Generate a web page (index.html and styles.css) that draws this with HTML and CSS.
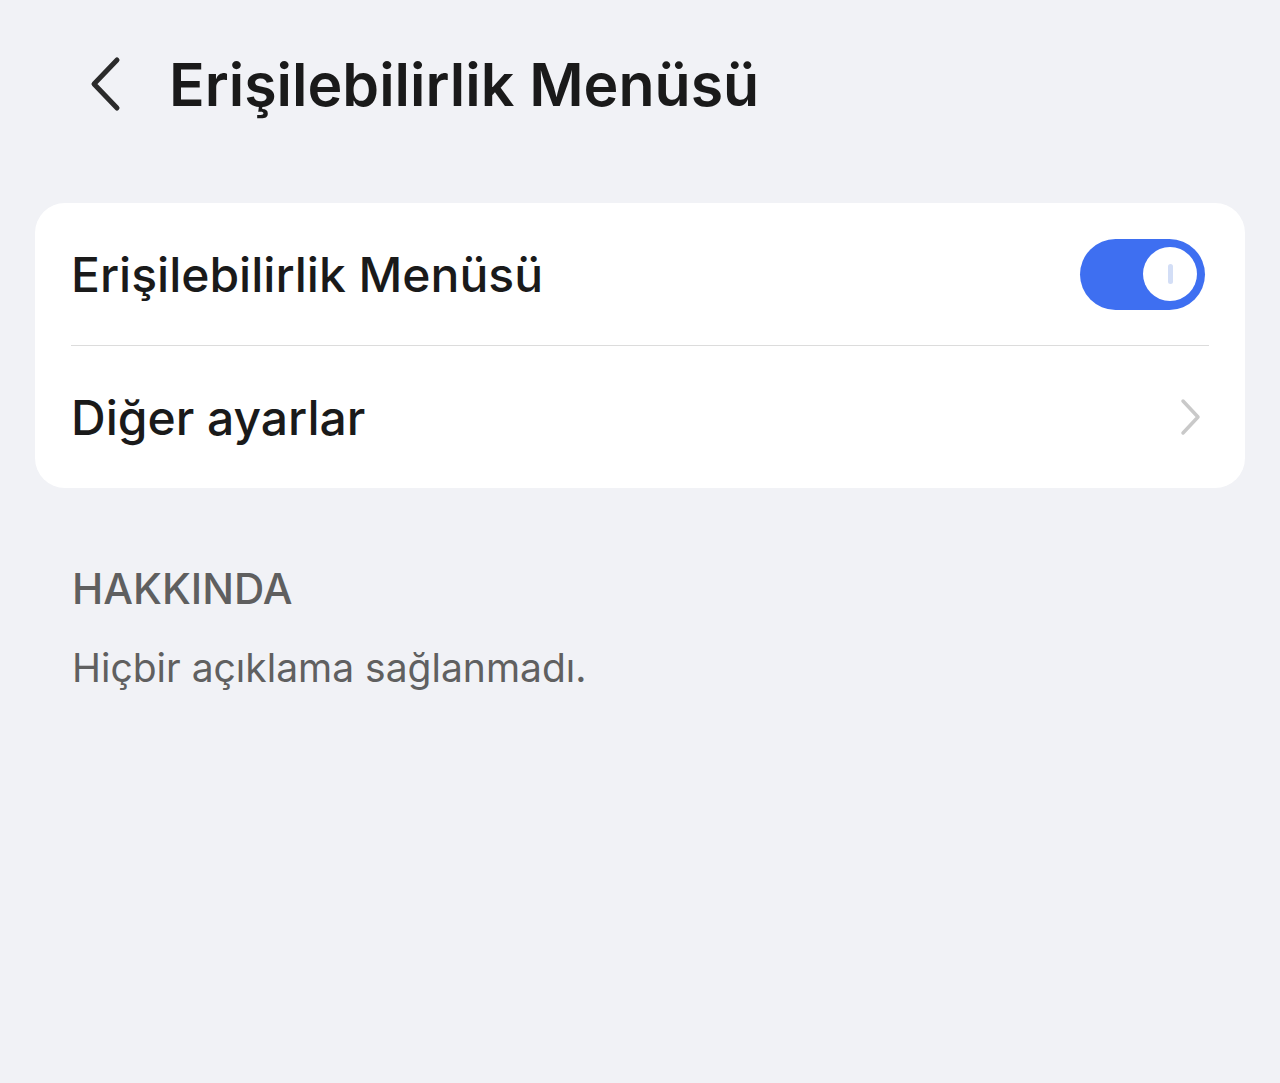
FILE: index.html
```html
<!DOCTYPE html>
<html lang="tr">
<head>
    <meta charset="UTF-8">
    <meta name="viewport" content="width=device-width, initial-scale=1.0">
    <title>Erişilebilirlik Menüsü</title>
    <link rel="stylesheet" href="styles.css">
</head>
<body>

    <div class="header">
        <button class="back-btn" aria-label="Geri">
            <svg width="36" height="56" viewBox="0 0 36 56">
                <path d="M31 4 L8 28 L31 52" fill="none" stroke="#2b2b2b" stroke-width="5" stroke-linecap="round" stroke-linejoin="round"/>
            </svg>
        </button>
        <h1>Erişilebilirlik Menüsü</h1>
    </div>

    <div class="card">
        <div class="row">
            <span class="row-title">Erişilebilirlik Menüsü</span>
            <div class="switch on">
                <div class="knob"><span class="knob-mark"></span></div>
            </div>
        </div>
        <div class="divider"></div>
        <div class="row">
            <span class="row-title">Diğer ayarlar</span>
            <svg class="chevron" width="24" height="40" viewBox="0 0 24 40">
                <path d="M4 4 L19 20 L4 36" fill="none" stroke="#c9c9c9" stroke-width="3.5" stroke-linecap="round" stroke-linejoin="round"/>
            </svg>
        </div>
    </div>

    <div class="about">
        <h2>HAKKINDA</h2>
        <p>Hiçbir açıklama sağlanmadı.</p>
    </div>

</body>
</html>
```

FILE: styles.css
```css
body {
    font-family: 'Inter', 'Open Sans', sans-serif;
    margin: 0;
    padding: 0;
    background: #f1f2f6;
    color: #1a1a1a;
    height: 1083px;
}

.header {
    display: flex;
    align-items: center;
    height: 168px;
    padding-left: 86px;
    box-sizing: border-box;
}

.back-btn {
    background: none;
    border: none;
    padding: 0;
    width: 36px;
    height: 56px;
    margin-right: 47px;
    cursor: pointer;
}

.back-btn svg {
    display: block;
}

.header h1 {
    margin: 0;
    font-size: 59px;
    font-weight: 600;
    letter-spacing: 0;
    color: #1a1a1a;
}

.card {
    margin: 35px 35px 0 35px;
    background: #fff;
    border-radius: 30px;
    padding: 0 36px;
}

.row {
    display: flex;
    align-items: center;
    justify-content: space-between;
    height: 142px;
}

.row-title {
    font-size: 48px;
    font-weight: 500;
    color: #1a1a1a;
}

.divider {
    height: 1px;
    background: #dcdcdc;
}

.switch {
    width: 125px;
    height: 71px;
    border-radius: 36px;
    background: #3e6ff1;
    display: flex;
    align-items: center;
    justify-content: flex-end;
    padding: 0 8px;
    box-sizing: border-box;
    margin-right: 4px;
}

.knob {
    width: 54px;
    height: 54px;
    border-radius: 50%;
    background: #fff;
    display: flex;
    align-items: center;
    justify-content: center;
}

.knob-mark {
    width: 5px;
    height: 20px;
    border-radius: 3px;
    background: #d3def6;
}

.chevron {
    margin-right: 6px;
}

.about {
    padding: 75px 72px 0 72px;
}

.about h2 {
    margin: 0;
    font-size: 42px;
    font-weight: 500;
    color: #5f5f5f;
}

.about p {
    margin: 30px 0 0 0;
    font-size: 39px;
    font-weight: 400;
    color: #606060;
}
```
